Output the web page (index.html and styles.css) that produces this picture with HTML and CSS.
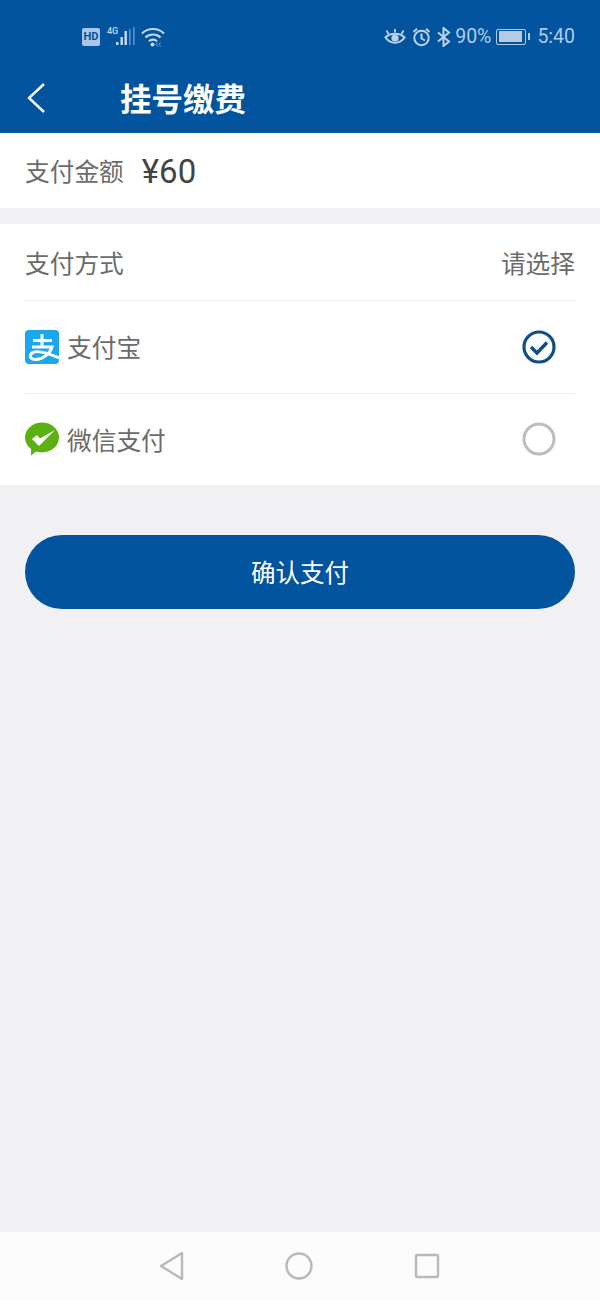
FILE: index.html
```html
<!DOCTYPE html>
<html lang="zh-CN">
<head>
    <meta charset="UTF-8">
    <meta name="viewport" content="width=device-width, initial-scale=1.0">
    <title>挂号缴费</title>
    <link rel="stylesheet" href="styles.css">
</head>
<body>
    <div class="page">
        <header class="header">
            <div class="status-bar">
                <div class="status-left">
                    <span class="hd-badge">HD</span>
                    <span class="signal">
                        <span class="net-label">4G</span>
                        <svg class="signal-bars" width="20" height="20" viewBox="0 0 20 20">
                            <rect x="1" y="15" width="2.4" height="3" fill="#c9dcef"/>
                            <rect x="5.5" y="10" width="2.4" height="8" fill="#c9dcef"/>
                            <rect x="9.5" y="4" width="2.4" height="14" fill="#c9dcef"/>
                            <rect x="14" y="2" width="1.6" height="16" fill="#5f90c4"/>
                            <rect x="18" y="0" width="1.6" height="18" fill="#5f90c4"/>
                        </svg>
                    </span>
                    <svg class="wifi" width="24" height="20" viewBox="0 0 24 20" fill="none" stroke="#c3d6ea" stroke-width="2.2">
                        <path d="M1 6.5C7 .5 17 .5 23 6.5"/>
                        <path d="M4.5 10.5C8.5 6.5 15.5 6.5 19.5 10.5"/>
                        <path d="M8 14.2C10.2 12.2 13.8 12.2 16 14.2"/>
                        <circle cx="11.5" cy="17.5" r="2" fill="#c3d6ea" stroke="none"/>
                        <path d="M16.5 15.5L15 17.5L16.5 19.5M19.5 15.5L18 17.5L19.5 19.5" stroke-width="1" stroke="#7ea6d2"/>
                    </svg>
                </div>
                <div class="status-right">
                    <svg width="22" height="20" viewBox="0 0 22 20" fill="none" stroke="#bcd3ea" stroke-width="2">
                        <path d="M1.5 10.5C6 5.5 16 5.5 20.5 10.5C16 17.5 6 17.5 1.5 10.5Z"/>
                        <circle cx="11" cy="11" r="3.6" fill="#bcd3ea" stroke="none"/>
                        <path d="M4.5 7L2.5 3.5M11 5.5V2M17.5 7L19.5 3.5" stroke-width="1.8"/>
                    </svg>
                    <svg width="20" height="20" viewBox="0 0 20 20" fill="none" stroke="#bcd3ea" stroke-width="2">
                        <circle cx="10.5" cy="11" r="7.2"/>
                        <path d="M10.5 6.5V11.5L14 13.5"/>
                        <path d="M2.5 5L6 1.8M18.5 5L15 1.8"/>
                    </svg>
                    <svg class="bluetooth" width="15" height="20" viewBox="0 0 15 20" fill="none" stroke="#bcd3ea" stroke-width="2">
                        <path d="M2 5.5L13 14.5L7.5 19V1L13 5.5L2 14.5"/>
                    </svg>
                    <span class="status-text status-battery">90%</span>
                    <span class="battery"><span class="battery-fill"></span></span>
                    <span class="battery-tip"></span>
                    <span class="status-text status-time">5:40</span>
                </div>
            </div>
            <div class="nav-bar">
                <svg class="back" width="20" height="32" viewBox="0 0 20 32" fill="none" stroke="#fff" stroke-width="2.4">
                    <path d="M18 2L3 16L18 30"/>
                </svg>
                <h1 class="nav-title">挂号缴费</h1>
            </div>
        </header>

        <section class="amount-row">
            <span class="label">支付金额</span>
            <span class="amount">¥60</span>
        </section>

        <section class="pay-card">
            <div class="pay-head">
                <span class="label">支付方式</span>
                <span class="label">请选择</span>
            </div>
            <div class="pay-row">
                <!-- alipay logo -->
                <svg class="pay-logo" width="34" height="34" viewBox="0 0 34 34">
                    <rect width="34" height="34" rx="4" fill="#1aa7ee"/>
                    <path d="M8 10.5H27M17 4V17M7 17H27C25 24 17 29.5 11 29.5C6 29.5 4 26.5 6 24C9 20 18 21 34 28" fill="none" stroke="#fff" stroke-width="3"/>
                </svg>
                <span class="label">支付宝</span>
                <svg class="radio" width="34" height="34" viewBox="0 0 34 34" fill="none">
                    <circle cx="17" cy="17" r="15" stroke="#0f4f85" stroke-width="3.2"/>
                    <path d="M9 17L15 23L25 12.5" stroke="#0f4f85" stroke-width="3.4"/>
                </svg>
            </div>
            <div class="pay-row">
                <!-- wechat pay logo -->
                <svg class="pay-logo" width="34" height="34" viewBox="0 0 34 34">
                    <ellipse cx="17" cy="15.5" rx="17" ry="15" fill="#5bb012"/>
                    <path d="M6 26L6 33.5L13 28Z" fill="#5bb012"/>
                    <path d="M7 17L12 13L15 16.5L30 8L14 24Z" fill="#fff"/>
                </svg>
                <span class="label">微信支付</span>
                <svg class="radio" width="34" height="34" viewBox="0 0 34 34" fill="none">
                    <circle cx="17" cy="17" r="15" stroke="#bdbdbd" stroke-width="3"/>
                </svg>
            </div>
        </section>

        <div class="actions">
            <button class="confirm-btn" type="button">确认支付</button>
        </div>

        <nav class="soft-keys">
            <svg width="26" height="30" viewBox="0 0 26 30" fill="none" stroke="#b9b9b9" stroke-width="2.4" stroke-linejoin="round">
                <path d="M24 2V28L3 15Z"/>
            </svg>
            <svg width="28" height="28" viewBox="0 0 28 28" fill="none" stroke="#b9b9b9" stroke-width="2.4">
                <circle cx="14" cy="14" r="12.5"/>
            </svg>
            <svg width="26" height="26" viewBox="0 0 26 26" fill="none" stroke="#b9b9b9" stroke-width="2.4" stroke-linejoin="round">
                <rect x="2" y="2" width="22" height="22" rx="1"/>
            </svg>
        </nav>
    </div>
</body>
</html>
```

FILE: styles.css
```css
* {
    box-sizing: border-box;
}
body {
    margin: 0;
    font-family: "Noto Sans CJK SC", "Liberation Sans", sans-serif;
    background-color: #f1f1f3;
}
.page {
    display: flex;
    flex-direction: column;
    height: 1300px;
}
.header {
    height: 133px;
    background-color: #02549f;
    display: flex;
    flex-direction: column;
}
.status-bar {
    height: 66px;
    padding: 7px 25px 0 82px;
    display: flex;
    align-items: center;
    justify-content: space-between;
    color: #aecbe8;
}
.status-left,
.status-right {
    display: flex;
    align-items: center;
}
.status-left {
    gap: 6px;
}
.status-right {
    gap: 5px;
}
.hd-badge {
    width: 18px;
    height: 18px;
    border-radius: 2px;
    background-color: #a9c6e4;
    color: #02549f;
    font: bold 11px/18px "Roboto", sans-serif;
    text-align: center;
}
.signal {
    position: relative;
    width: 29px;
    height: 20px;
    display: flex;
    justify-content: flex-end;
    align-items: flex-end;
}
.net-label {
    position: absolute;
    left: 1px;
    top: -1px;
    font: 500 9px/10px "Roboto", sans-serif;
    color: #c3d6ea;
}
.status-text {
    font: 19.5px/22px "Roboto", sans-serif;
}
.status-battery {
    margin-left: -1px;
}
.status-time {
    margin-left: 2px;
}
.battery {
    width: 30px;
    height: 16px;
    border: 1.5px solid #aecbe8;
    border-radius: 2px;
    padding: 1.5px;
    display: flex;
}
.battery-fill {
    width: 92%;
    background-color: #b4cbe3;
}
.battery-tip {
    width: 2px;
    height: 7px;
    margin-left: -3px;
    background-color: #aecbe8;
}
.nav-bar {
    flex: 1;
    display: flex;
    align-items: center;
    padding: 0 0 4px 26px;
}
.nav-title {
    margin: -2px 0 0 74px;
    color: #fff;
    font-size: 31.5px;
    font-weight: bold;
    line-height: 40px;
}
.label {
    color: #6b6b6b;
    font-size: 24.7px;
    line-height: 33px;
}
.amount-row {
    height: 75px;
    padding: 0 25px;
    background-color: #fff;
    display: flex;
    align-items: center;
    gap: 18px;
}
.amount {
    color: #444;
    font: 33px/40px "Roboto", sans-serif;
    margin-top: 2px;
}
.pay-card {
    margin-top: 16px;
    height: 261px;
    padding: 0 25px;
    background-color: #fff;
    display: flex;
    flex-direction: column;
}
.pay-head {
    height: 77px;
    border-bottom: 1px solid #eaeaea;
    display: flex;
    align-items: center;
    justify-content: space-between;
}
.pay-row {
    flex: 1;
    display: flex;
    align-items: center;
    gap: 8px;
    padding-right: 19px;
}
.pay-row + .pay-row {
    border-top: 1px solid #eeeeee;
}
.pay-logo {
    flex-shrink: 0;
}
.radio {
    margin-left: auto;
}
.actions {
    padding: 50px 25px 0;
}
.confirm-btn {
    display: block;
    width: 100%;
    height: 74px;
    padding: 0 0 2px;
    border: none;
    border-radius: 37px;
    background-color: #02549f;
    color: #fff;
    font-family: inherit;
    font-size: 24.5px;
    cursor: pointer;
}
.soft-keys {
    margin-top: auto;
    height: 68px;
    background-color: #fcfcfc;
    display: flex;
    align-items: center;
    padding: 0 160px 0 158px;
    justify-content: space-between;
}
```
